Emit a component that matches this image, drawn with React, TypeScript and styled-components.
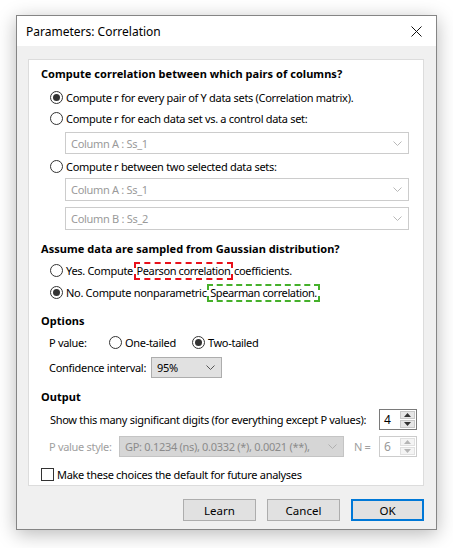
import React from "react";
import styled, { createGlobalStyle, css } from "styled-components";

const Global = createGlobalStyle`
  html, body { margin: 0; padding: 0; background: #ffffff; }
  body { font-family: "Noto Sans", "Segoe UI", sans-serif; font-size: 11px; letter-spacing: -0.3px; color: #000; }
  * { box-sizing: border-box; }
`;

const Page = styled.div`
  width: 453px;
  height: 548px;
  padding: 15px 0 0 16px;
`;

const Window = styled.div`
  width: 421px;
  height: 515px;
  border: 1px solid #858585;
  background: #f0f0f0;
  box-shadow: 0 4px 18px rgba(0, 0, 0, 0.28);
  display: flex;
  flex-direction: column;
`;

const TitleBar = styled.div`
  height: 30px;
  background: #ffffff;
  display: flex;
  align-items: center;
  justify-content: space-between;
  padding: 0 10px 0 9px;
  font-size: 12px;
  letter-spacing: 0;
  color: #000;
`;

const Close = styled.div`
  width: 12px;
  height: 12px;
  display: flex;
  align-items: center;
  justify-content: center;
  margin-right: 4px;
`;

const Body = styled.div`
  flex: 1;
  padding: 13px 12px 0 11px;
  display: flex;
  flex-direction: column;
`;

const Panel = styled.div`
  height: 427px;
  background: #ffffff;
  border: 1px solid #dcdcdc;
  padding: 3px 6px 0 12px;
  display: flex;
  flex-direction: column;
`;

const Row = styled.div<{ $h: number; $mt?: number; $indent?: number; $pr?: number }>`
  height: ${(p) => p.$h}px;
  margin-top: ${(p) => p.$mt ?? 0}px;
  padding-left: ${(p) => p.$indent ?? 0}px;
  padding-right: ${(p) => p.$pr ?? 0}px;
  display: flex;
  align-items: center;
  flex-shrink: 0;
  white-space: nowrap;
`;

const Heading = styled.div`
  font-weight: 700;
  font-size: 11px;
  letter-spacing: 0.05px;
`;

const RadioLabel = styled.label`
  display: inline-flex;
  align-items: center;
  gap: 3px;
  color: #000;
`;

const RadioCircle = styled.span<{ $checked?: boolean }>`
  width: 13px;
  height: 13px;
  border-radius: 50%;
  border: 1px solid #333333;
  background: #fff;
  display: inline-flex;
  align-items: center;
  justify-content: center;
  flex-shrink: 0;
  &::after {
    content: "";
    width: 7px;
    height: 7px;
    border-radius: 50%;
    background: ${(p) => (p.$checked ? "#333333" : "transparent")};
  }
`;

const Radio = ({ checked, children }: { checked?: boolean; children: React.ReactNode }) => (
  <RadioLabel>
    <RadioCircle $checked={checked} />
    <span>{children}</span>
  </RadioLabel>
);

const Mark = styled.span<{ $color: string }>`
  display: inline-block;
  line-height: 14px;
  padding: 0 1px;
  letter-spacing: -0.4px;
  outline: 2px dashed ${(p) => p.$color};
  outline-offset: 0px;
`;

const Select = styled.div<{ $variant: "disabled" | "button" | "grey"; $w?: number }>`
  height: 100%;
  width: ${(p) => (p.$w ? `${p.$w}px` : "100%")};
  display: flex;
  align-items: center;
  justify-content: space-between;
  padding: 0 6px 0 5px;
  overflow: hidden;
  flex-shrink: 0;
  ${(p) =>
    p.$variant === "disabled" &&
    css`
      background: #ffffff;
      border: 1px solid #cccccc;
      color: #9a9a9a;
    `}
  ${(p) =>
    p.$variant === "button" &&
    css`
      background: #e1e1e1;
      border: 1px solid #adadad;
      color: #000;
    `}
  ${(p) =>
    p.$variant === "grey" &&
    css`
      background: #d6d6d6;
      border: 1px solid #c4c4c4;
      color: #8b8b8b;
    `}
`;

const SelectText = styled.span`
  overflow: hidden;
  white-space: nowrap;
  flex: 1;
`;

const Chevron = ({ color, gap = 4 }: { color: string; gap?: number }) => (
  <svg width="9" height="5" viewBox="0 0 9 5" style={{ flexShrink: 0, marginLeft: gap }}>
    <path d="M0.5 0.5 L4.5 4.5 L8.5 0.5" fill="none" stroke={color} strokeWidth="1" />
  </svg>
);

const FieldLabel = styled.span<{ $w?: number; $muted?: boolean }>`
  display: inline-block;
  width: ${(p) => (p.$w ? `${p.$w}px` : "auto")};
  color: ${(p) => (p.$muted ? "#a0a0a0" : "#000")};
  flex-shrink: 0;
`;

const Spinner = styled.div<{ $disabled?: boolean }>`
  width: 38px;
  height: 21px;
  border: 1px solid ${(p) => (p.$disabled ? "#cccccc" : "#7a7a7a")};
  background: #fff;
  display: flex;
  color: ${(p) => (p.$disabled ? "#9a9a9a" : "#000")};
  flex-shrink: 0;
  font-size: 12px;
`;

const SpinValue = styled.div`
  flex: 1;
  display: flex;
  align-items: center;
  padding-left: 4px;
`;

const SpinButtons = styled.div`
  width: 16px;
  display: flex;
  flex-direction: column;
  padding: 1px 1px 1px 0;
  gap: 1px;
`;

const SpinBtn = styled.div<{ $disabled?: boolean }>`
  flex: 1;
  background: ${(p) => (p.$disabled ? "#f4f4f4" : "#e6e6e6")};
  border: 1px solid ${(p) => (p.$disabled ? "#e0e0e0" : "#c8c8c8")};
  display: flex;
  align-items: center;
  justify-content: center;
`;

const Tri = ({ up, color }: { up?: boolean; color: string }) => (
  <svg width="7" height="4" viewBox="0 0 7 4">
    <path d={up ? "M0 4 L3.5 0 L7 4 Z" : "M0 0 L3.5 4 L7 0 Z"} fill={color} />
  </svg>
);

const NumSpinner = ({ value, disabled }: { value: string; disabled?: boolean }) => {
  const c = disabled ? "#b5b5b5" : "#333";
  return (
    <Spinner $disabled={disabled}>
      <SpinValue>{value}</SpinValue>
      <SpinButtons>
        <SpinBtn $disabled={disabled}>
          <Tri up color={c} />
        </SpinBtn>
        <SpinBtn $disabled={disabled}>
          <Tri color={c} />
        </SpinBtn>
      </SpinButtons>
    </Spinner>
  );
};

const CheckBox = styled.span`
  width: 13px;
  height: 13px;
  border: 1px solid #333;
  background: #fff;
  display: inline-block;
  flex-shrink: 0;
`;

const Footer = styled.div`
  display: flex;
  justify-content: flex-end;
  gap: 11px;
  padding-top: 13px;
`;

const Button = styled.div<{ $primary?: boolean }>`
  width: 73px;
  height: 22px;
  background: #e1e1e1;
  border: ${(p) => (p.$primary ? "2px solid #0078d7" : "1px solid #adadad")};
  display: flex;
  align-items: center;
  justify-content: center;
  color: #000;
  font-size: 11.5px;
  letter-spacing: 0;
`;

const Spacer = styled.span<{ $w: number }>`
  display: inline-block;
  width: ${(p) => p.$w}px;
  flex-shrink: 0;
`;

const Fill = styled.span`
  flex: 1;
`;

export default function App() {
  return (
    <>
      <Global />
      <Page>
        <Window>
          <TitleBar>
            <span>Parameters: Correlation</span>
            <Close>
              <svg width="11" height="11" viewBox="0 0 11 11">
                <path d="M0.5 0.5 L10.5 10.5 M10.5 0.5 L0.5 10.5" stroke="#111" strokeWidth="1" />
              </svg>
            </Close>
          </TitleBar>
          <Body>
            <Panel>
              <Row $h={20}>
                <Heading>Compute correlation between which pairs of columns?</Heading>
              </Row>
              <Row $h={21} $mt={4} $indent={9}>
                <Radio checked>Compute r for every pair of Y data sets (Correlation matrix).</Radio>
              </Row>
              <Row $h={21} $indent={9}>
                <Radio>Compute r for each data set vs. a control data set:</Radio>
              </Row>
              <Row $h={22} $mt={3} $indent={24} $pr={8}>
                <Select $variant="disabled">
                  <SelectText>Column A : Ss_1</SelectText>
                  <Chevron color="#b8b8b8" />
                </Select>
              </Row>
              <Row $h={20} $mt={2} $indent={9}>
                <Radio>Compute r between two selected data sets:</Radio>
              </Row>
              <Row $h={23} $mt={2} $indent={24} $pr={8}>
                <Select $variant="disabled">
                  <SelectText>Column A : Ss_1</SelectText>
                  <Chevron color="#b8b8b8" />
                </Select>
              </Row>
              <Row $h={23} $mt={6} $indent={24} $pr={8}>
                <Select $variant="disabled">
                  <SelectText>Column B : Ss_2</SelectText>
                  <Chevron color="#b8b8b8" />
                </Select>
              </Row>
              <Row $h={20} $mt={8}>
                <Heading>Assume data are sampled from Gaussian distribution?</Heading>
              </Row>
              <Row $h={22} $mt={1} $indent={9}>
                <Radio>
                  Yes. Compute <Mark $color="#e8101a">Pearson correlation</Mark> coefficients.
                </Radio>
              </Row>
              <Row $h={22} $indent={9}>
                <Radio checked>
                  No. Compute nonparametric <Mark $color="#45b02a">Spearman correlation.</Mark>
                </Radio>
              </Row>
              <Row $h={20} $mt={7}>
                <Heading>Options</Heading>
              </Row>
              <Row $h={22} $mt={1} $indent={8}>
                <FieldLabel $w={60}>P value:</FieldLabel>
                <Radio>One-tailed</Radio>
                <Spacer $w={16} />
                <Radio checked>Two-tailed</Radio>
              </Row>
              <Row $h={21} $mt={4} $indent={8}>
                <FieldLabel $w={102}>Confidence interval:</FieldLabel>
                <Select $variant="button" $w={71}>
                  <SelectText>95%</SelectText>
                  <Chevron color="#555" />
                </Select>
              </Row>
              <Row $h={20} $mt={8}>
                <Heading>Output</Heading>
              </Row>
              <Row $h={21} $mt={3} $indent={9}>
                <FieldLabel>Show this many significant digits (for everything except P values):</FieldLabel>
                <Fill />
                <NumSpinner value="4" />
              </Row>
              <Row $h={21} $mt={6} $indent={8}>
                <FieldLabel $muted $w={70}>P value style:</FieldLabel>
                <Select $variant="grey" $w={225}>
                  <SelectText>GP: 0.1234 (ns), 0.0332 (*), 0.0021 (**),</SelectText>
                  <Chevron color="#b0b0b0" gap={8} />
                </Select>
                <Spacer $w={10} />
                <FieldLabel $muted>N =</FieldLabel>
                <Fill />
                <NumSpinner value="6" disabled />
              </Row>
              <Row $h={20} $mt={7}>
                <RadioLabel>
                  <CheckBox />
                  <span>Make these choices the default for future analyses</span>
                </RadioLabel>
              </Row>
            </Panel>
            <Footer>
              <Button>Learn</Button>
              <Button>Cancel</Button>
              <Button $primary>OK</Button>
            </Footer>
          </Body>
        </Window>
      </Page>
    </>
  );
}
